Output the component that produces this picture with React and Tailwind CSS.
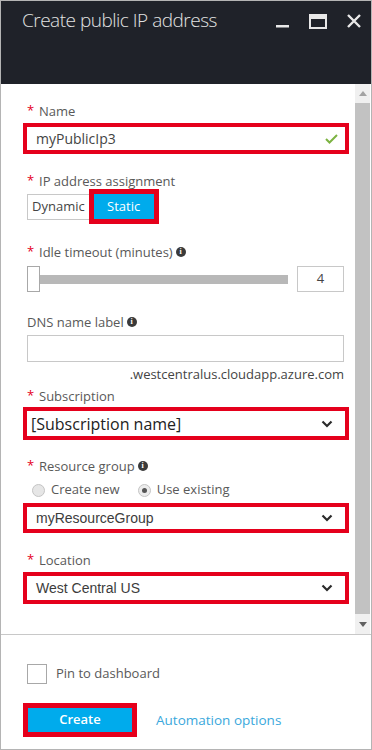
import React from 'react';

const RED = 'border-[#e5001c]';

function Label({ text, required, info }) {
  return (
    <div className="flex items-center h-4 text-[13px] leading-4 text-[#595959]">
      {required ? <span className="text-[#e5001c] w-[12px] -mt-[3px] text-[13px]">*</span> : null}
      <span>{text}</span>
      {info ? (
        <span className="ml-[3px] w-[10px] h-[10px] rounded-full bg-[#3a3a3a] text-white text-[8px] leading-[10px] text-center font-bold font-['Liberation_Serif',serif]">i</span>
      ) : null}
    </div>
  );
}

function Chevron() {
  return (
    <svg width="12" height="8" viewBox="0 0 12 8" className="shrink-0">
      <path d="M1.5 1.5 L6 6 L10.5 1.5" fill="none" stroke="#2b2b2b" strokeWidth="2.2" />
    </svg>
  );
}

function Select({ value, className }) {
  return (
    <div className={`-ml-[4px] w-[326px] border-4 ${RED} bg-white flex items-center justify-between pl-[9px] pr-[12px] ${className}`}>
      <span className="text-[14px] text-[#3c3c3c] font-['Liberation_Sans',sans-serif]">{value}</span>
      <Chevron />
    </div>
  );
}

export default function App() {
  return (
    <div className="w-[372px] h-[750px] bg-white border border-[#b4b4b4] flex flex-col font-['Open_Sans',sans-serif] overflow-hidden">
      {/* Header */}
      <div className="h-[83px] shrink-0 bg-[#1f2229] flex items-start justify-between pl-[21px] pr-[10px] pt-[5px]">
        <span className="text-[19px] font-light text-[#e2e2e2] tracking-[-0.5px]">Create public IP address</span>
        <div className="flex items-center gap-[20px] pt-[7px]">
          <svg width="13" height="16" viewBox="0 0 13 16"><rect x="0" y="12" width="13" height="2.5" fill="#e8e8e8" /></svg>
          <svg width="18" height="15" viewBox="0 0 18 15"><rect x="1" y="1" width="16" height="13" fill="none" stroke="#e8e8e8" strokeWidth="2" /><rect x="1" y="1" width="16" height="4" fill="#e8e8e8" /></svg>
          <svg width="14" height="14" viewBox="0 0 14 14"><path d="M1 1 L13 13 M13 1 L1 13" stroke="#e8e8e8" strokeWidth="2.4" /></svg>
        </div>
      </div>

      {/* Body */}
      <div className="flex h-[550px] shrink-0">
        <div className="flex-1 pl-[26px] pt-[19px]">
          <Label text="Name" required />
          <div className={`mt-[4px] -ml-[4px] w-[326px] h-[31px] border-4 ${RED} flex items-center justify-between pl-[9px] pr-[7px]`}>
            <span className="text-[14px] text-[#444]">myPublicIp3</span>
            <svg width="13" height="10" viewBox="0 0 13 10"><path d="M1 5 L4.5 8.5 L12 1" fill="none" stroke="#7cb342" strokeWidth="2" /></svg>
          </div>

          <div className="mt-[19px]"><Label text="IP address assignment" required /></div>
          <div className="h-[35px] flex items-center">
            <div className="h-[26px] border border-[#c8c8c8] border-r-0 px-[4px] flex items-center text-[13px] text-[#444]">Dynamic</div>
            <div className={`h-[35px] border-[5px] ${RED} flex`}>
              <div className="bg-[#00abec] text-white text-[13px] w-[60px] flex items-center justify-center">Static</div>
            </div>
          </div>

          <div className="mt-[20px]"><Label text="Idle timeout (minutes)" required info /></div>
          <div className="mt-[6px] h-[26px] flex items-center">
            <div className="w-[13px] h-[26px] border border-[#a8a8a8] bg-white shrink-0" />
            <div className="w-[248px] h-[9px] bg-[#b8b8b8]" />
            <div className="ml-[9px] w-[47px] h-[26px] border border-[#c8c8c8] flex items-center justify-center text-[13px] text-[#444]">4</div>
          </div>

          <div className="mt-[22px]"><Label text="DNS name label" info /></div>
          <div className="mt-[5px] w-[317px] h-[27px] border border-[#c8c8c8]" />
          <div className="mt-[4px] w-[317px] h-4 text-right text-[13px] leading-4 text-[#444]">.westcentralus.cloudapp.azure.com</div>

          <div className="mt-[6px]"><Label text="Subscription" required /></div>
          <div className={`mt-[3px] -ml-[4px] w-[326px] h-[33px] border-4 ${RED} bg-white flex items-center justify-between pl-[4px] pr-[12px]`}>
            <span className="text-[16px] text-[#222]">[Subscription name]</span>
            <Chevron />
          </div>

          <div className="mt-[18px]"><Label text="Resource group" required info /></div>
          <div className="mt-[8px] h-4 flex items-center text-[13px] text-[#595959]">
            <span className="ml-[5px] w-[13px] h-[13px] rounded-full border border-[#c4c4c4] bg-[#e6e6e6]" />
            <span className="ml-[6px]">Create new</span>
            <span className="ml-[18px] w-[13px] h-[13px] rounded-full border border-[#c4c4c4] bg-[#ececec] flex items-center justify-center">
              <span className="w-[5px] h-[5px] rounded-full bg-[#555]" />
            </span>
            <span className="ml-[6px]">Use existing</span>
          </div>
          <Select value="myResourceGroup" className="mt-[5px] h-[30px]" />

          <div className="mt-[19px]"><Label text="Location" required /></div>
          <Select value="West Central US" className="mt-[4px] h-[32px]" />
        </div>

        {/* Scrollbar */}
        <div className="w-[15px] mr-[1px] flex flex-col bg-[#f0f0f0]">
          <div className="h-[19px] flex items-center justify-center">
            <svg width="8" height="5" viewBox="0 0 8 5"><path d="M0 5 L4 0 L8 5 Z" fill="#a3a3a3" /></svg>
          </div>
          <div className="flex-1 bg-[#c2c2c2]" />
          <div className="h-[20px] flex items-center justify-center">
            <svg width="8" height="5" viewBox="0 0 8 5"><path d="M0 0 L4 5 L8 0 Z" fill="#606060" /></svg>
          </div>
        </div>
      </div>

      {/* Footer */}
      <div className="flex-1 border-t border-[#c8c8c8] pl-[26px] pt-[29px]">
        <div className="flex items-center">
          <div className="w-[20px] h-[20px] border border-[#a8a8a8] bg-white" />
          <span className="ml-[9px] text-[13px] text-[#595959]">Pin to dashboard</span>
        </div>
        <div className="mt-[19px] flex items-center">
          <div className={`-ml-[4px] border-[5px] ${RED} flex`}>
            <div className="w-[104px] h-[24px] bg-[#00abec] text-white text-[13px] font-semibold flex items-center justify-center">Create</div>
          </div>
          <span className="ml-[19px] text-[13.5px] text-[#3aa8dc]">Automation options</span>
        </div>
      </div>
    </div>
  );
}
